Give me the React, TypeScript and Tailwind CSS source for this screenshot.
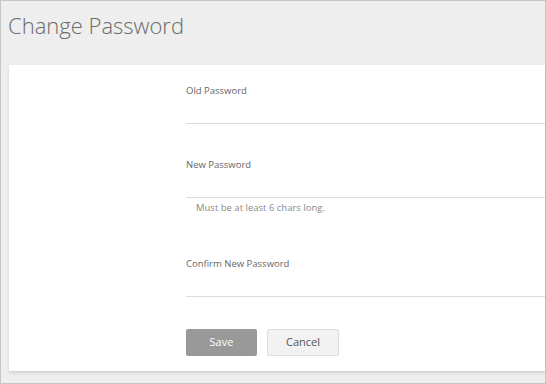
export default function App() {
  return (
    <div
      className="w-[546px] h-[384px] flex flex-col border border-[#c6c6c6] bg-[#eeeeee] text-[#666]"
      style={{ fontFamily: '"Open Sans", "Noto Sans", sans-serif' }}
    >
      <h1 className="pl-[7px] pt-[9px] h-[64px] text-[22px] leading-[30px] font-light text-[#6b6b6b]">Change Password</h1>
      <div className="ml-[8px] h-[306px] bg-white shadow-[0_2px_3px_rgba(0,0,0,0.12)] pl-[177px] pt-[19px]">
        <Field label="Old Password" />
        <div className="mt-[34px]">
          <Field label="New Password" />
        </div>
        <p className="mt-[3px] pl-[10px] text-[9.5px] leading-[14px] text-[#8a8a8a]">Must be at least 6 chars long.</p>
        <div className="mt-[42px]">
          <Field label="Confirm New Password" />
        </div>
        <div className="mt-[32px] flex gap-[10px]">
          <button className="w-[71px] h-[27px] rounded-[2px] bg-[#999] text-[11px] text-white">Save</button>
          <button className="w-[72px] h-[27px] rounded-[2px] border border-[#dedede] bg-[#f2f2f2] text-[11px] text-[#555]">
            Cancel
          </button>
        </div>
      </div>
    </div>
  );
}

function Field({ label }: { label: string }) {
  return (
    <div>
      <label className="block text-[9.5px] leading-[14px] text-[#666]">{label}</label>
      <div className="h-[26px] border-b border-[#dcdcdc]" />
    </div>
  );
}
